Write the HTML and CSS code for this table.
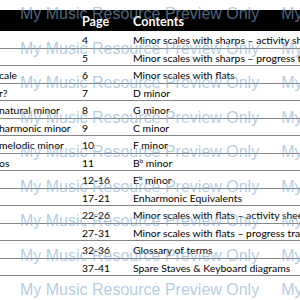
FILE: index.html
```html
<!DOCTYPE html>
<html>
<head>
<meta charset="utf-8">
<link rel="stylesheet" href="styles.css">
</head>
<body>
<div class="page">
  <div class="toc">
    <div class="row head"><span class="c1"></span><span class="c2">Page</span><span class="c3">Contents</span></div>
    <div class="row"><span class="c1"></span><span class="c2">4</span><span class="c3">Minor scales with sharps – activity sheet</span></div>
    <div class="row"><span class="c1"></span><span class="c2">5</span><span class="c3">Minor scales with sharps – progress tracker</span></div>
    <div class="row"><span class="c1">cale</span><span class="c2">6</span><span class="c3">Minor scales with flats</span></div>
    <div class="row"><span class="c1">r?</span><span class="c2">7</span><span class="c3">D minor</span></div>
    <div class="row"><span class="c1">natural minor</span><span class="c2">8</span><span class="c3">G minor</span></div>
    <div class="row"><span class="c1">harmonic minor</span><span class="c2">9</span><span class="c3">C minor</span></div>
    <div class="row"><span class="c1">melodic minor</span><span class="c2">10</span><span class="c3">F minor</span></div>
    <div class="row"><span class="c1">os</span><span class="c2">11</span><span class="c3">B<sup class="flat">b</sup> minor</span></div>
    <div class="row"><span class="c1"></span><span class="c2">12-16</span><span class="c3">E<sup class="flat">b</sup> minor</span></div>
    <div class="row"><span class="c1"></span><span class="c2">17-21</span><span class="c3">Enharmonic Equivalents</span></div>
    <div class="row"><span class="c1"></span><span class="c2">22-26</span><span class="c3">Minor scales with flats – activity sheet</span></div>
    <div class="row"><span class="c1"></span><span class="c2">27-31</span><span class="c3">Minor scales with flats – progress tracker</span></div>
    <div class="row"><span class="c1"></span><span class="c2">32-36</span><span class="c3">Glossary of terms</span></div>
    <div class="row"><span class="c1"></span><span class="c2">37-41</span><span class="c3">Spare Staves &amp; Keyboard diagrams</span></div>
  </div>
  <div class="watermark" aria-hidden="true">
    <div class="wm-line"><span>My Music Resource Preview Only</span><span>My Music Resource Preview Only</span></div>
    <div class="wm-line"><span>My Music Resource Preview Only</span><span>My Music Resource Preview Only</span></div>
    <div class="wm-line"><span>My Music Resource Preview Only</span><span>My Music Resource Preview Only</span></div>
    <div class="wm-line"><span>My Music Resource Preview Only</span><span>My Music Resource Preview Only</span></div>
    <div class="wm-line"><span>My Music Resource Preview Only</span><span>My Music Resource Preview Only</span></div>
    <div class="wm-line"><span>My Music Resource Preview Only</span><span>My Music Resource Preview Only</span></div>
    <div class="wm-line"><span>My Music Resource Preview Only</span><span>My Music Resource Preview Only</span></div>
    <div class="wm-line"><span>My Music Resource Preview Only</span><span>My Music Resource Preview Only</span></div>
    <div class="wm-line"><span>My Music Resource Preview Only</span><span>My Music Resource Preview Only</span></div>
  </div>
</div>
</body>
</html>
```
FILE: styles.css
```css
html, body {
  margin: 0;
  padding: 0;
  background: #fff;
  overflow: hidden;
}
body {
  width: 300px;
  height: 300px;
  font-family: Lato, "Liberation Sans", sans-serif;
  color: #000;
}
.page {
  position: relative;
  width: 300px;
  height: 300px;
  padding-top: 10px;
  box-sizing: border-box;
  overflow: hidden;
}
.toc {
  display: flex;
  flex-direction: column;
}
.row {
  display: grid;
  grid-template-columns: 78px 50px minmax(0, 1fr);
  align-items: center;
  height: 17.5px;
  box-sizing: border-box;
  border-bottom: 1px solid #858585;
  font-size: 10.4px;
  white-space: nowrap;
  overflow: hidden;
  padding-top: 2px;
}
.row > span {
  overflow: hidden;
}
.row.head {
  height: 21px;
  background: #000;
  color: #fff;
  font-weight: 700;
  font-size: 12.6px;
  border-bottom: none;
  padding-top: 2px;
}
.c1 {
  text-indent: -1px;
}
.c2 {
  padding-left: 4px;
}
.c3 {
  padding-left: 5px;
}
.flat {
  font-size: 6px;
  vertical-align: 4px;
  line-height: 0;
}
.watermark {
  position: absolute;
  left: 20px;
  top: -3px;
  pointer-events: none;
  font-family: "Liberation Sans", Arial, sans-serif;
  font-size: 16px;
  line-height: 34.5px;
  color: rgba(130, 170, 210, 0.6);
  white-space: nowrap;
}
.wm-line {
  display: flex;
  gap: 22px;
}
```
